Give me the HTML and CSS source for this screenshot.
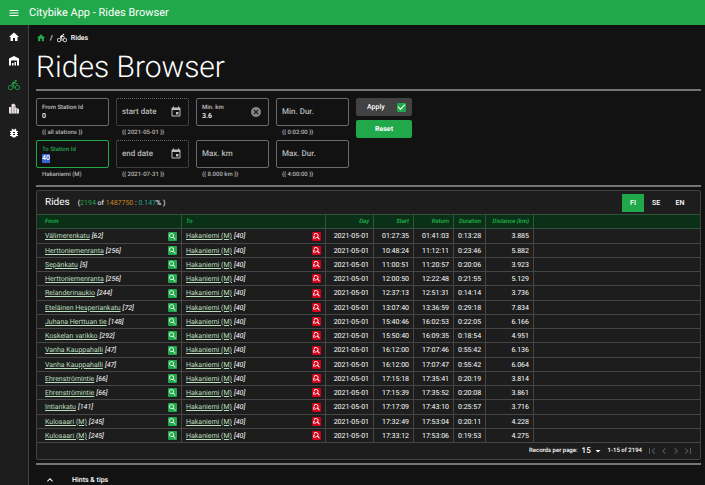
FILE: index.html
```html
<!DOCTYPE html>
<html lang="en">
<head>
<meta charset="utf-8">
<title>Citybike App - Rides Browser</title>
<link rel="stylesheet" href="styles.css">
</head>
<body>
<svg class="sprite" aria-hidden="true">
  <symbol id="menu" viewBox="0 0 24 24"><path d="M3 18h18v-2H3v2zm0-5h18v-2H3v2zm0-7v2h18V6H3z"/></symbol>
  <symbol id="home" viewBox="0 0 24 24"><path d="M10 20v-6h4v6h5v-8h3L12 3 2 12h3v8z"/></symbol>
  <symbol id="station" viewBox="0 0 24 24"><path d="M12 2 2 7v14h4V11h12v10h4V7zM8 16h3v5H8zm5-2h3v7h-3z"/></symbol>
  <symbol id="bike" viewBox="0 0 24 24"><path d="M15.5 5.5c1.1 0 2-.9 2-2s-.9-2-2-2-2 .9-2 2 .9 2 2 2zM5 12c-2.8 0-5 2.2-5 5s2.2 5 5 5 5-2.2 5-5-2.2-5-5-5zm0 8.500c-1.900 0-3.500-1.600-3.500-3.500s1.600-3.500 3.500-3.500 3.500 1.600 3.500 3.500-1.600 3.500-3.500 3.500zm5.800-10 2.400-2.400.8.800c1.300 1.300 3 2.100 5.100 2.100V9c-1.500 0-2.700-.6-3.600-1.500l-1.900-1.900c-.5-.4-1-.6-1.600-.6s-1.100.2-1.400.6L7.800 8.400c-.4.400-.6.900-.6 1.400 0 .6.200 1.100.6 1.400L11 14v5h2v-6.200l-2.200-2.300zM19 12c-2.800 0-5 2.200-5 5s2.200 5 5 5 5-2.200 5-5-2.200-5-5-5zm0 8.500c-1.900 0-3.500-1.600-3.500-3.500s1.600-3.500 3.500-3.500 3.500 1.600 3.500 3.500-1.600 3.500-3.500 3.500z"/></symbol>
  <symbol id="city" viewBox="0 0 24 24"><path d="M2 8h5V3l4-2 4 3v5l7 3v9H2z"/><path class="shade" d="M6 8h2v12H6zM11 6h2v14h-2zm5 5h2v9h-2z"/></symbol>
  <symbol id="bug" viewBox="0 0 24 24"><path d="M20 8h-2.810c-.45-.78-1.070-1.450-1.820-1.960L17 4.410 15.590 3l-2.170 2.170C12.960 5.060 12.490 5 12 5s-.96.06-1.410.17L8.410 3 7 4.410l1.620 1.630C7.880 6.550 7.260 7.220 6.810 8H4v2h2.090c-.05.33-.09.66-.09 1v1H4v2h2v1c0 .34.04.67.09 1H4v2h2.810c1.040 1.790 2.970 3 5.190 3s4.150-1.210 5.190-3H20v-2h-2.090c.05-.33.09-.66.09-1v-1h2v-2h-2v-1c0-.34-.04-.67-.09-1H20V8zm-6 8h-4v-2h4v2zm0-4h-4v-2h4v2z"/></symbol>
  <symbol id="event" viewBox="0 0 24 24"><path d="M17 12h-5v5h5v-5zM16 1v2H8V1H6v2H5c-1.110 0-1.990.9-1.990 2L3 19c0 1.100.89 2 2 2h14c1.100 0 2-.9 2-2V5c0-1.100-.9-2-2-2h-1V1h-2zm3 18H5V8h14v11z"/></symbol>
  <symbol id="cancel" viewBox="0 0 24 24"><path d="M12 2C6.470 2 2 6.470 2 12s4.470 10 10 10 10-4.470 10-10S17.530 2 12 2zm5 13.590L15.590 17 12 13.410 8.410 17 7 15.590 10.590 12 7 8.410 8.410 7 12 10.590 15.590 7 17 8.410 13.410 12 17 15.590z"/></symbol>
  <symbol id="search" viewBox="0 0 24 24"><path d="M15.500 14h-.79l-.28-.27A6.470 6.470 0 0 0 16 9.500 6.500 6.500 0 1 0 9.500 16c1.610 0 3.090-.59 4.230-1.570l.27.28v.79l5 4.990L20.490 19l-4.990-5zm-6 0a4.500 4.500 0 1 1 0-9 4.500 4.500 0 0 1 0 9z"/></symbol>
  <symbol id="unsearch" viewBox="0 0 24 24"><path d="M11 3a6.500 6.500 0 0 1 5.300 10.200l4.700 5.300-1.800 1.800-5.200-5.100-2 .8v-2.400A4.300 4.300 0 1 0 6.500 9H4.200A6.500 6.500 0 0 1 11 3zM3 11h5v2H5v2h3v2H3zm6 3h2v4H9z"/></symbol>
  <symbol id="up" viewBox="0 0 24 24"><path d="m12 8-6 6 1.410 1.410L12 10.830l4.590 4.580L18 14z"/></symbol>
  <symbol id="drop" viewBox="0 0 24 24"><path d="m7 10 5 5 5-5z"/></symbol>
  <symbol id="first" viewBox="0 0 24 24"><path d="M18.410 16.590 13.820 12l4.590-4.590L17 6l-6 6 6 6zM6 6h2v12H6z"/></symbol>
  <symbol id="prev" viewBox="0 0 24 24"><path d="M15.410 7.410 14 6l-6 6 6 6 1.410-1.410L10.830 12z"/></symbol>
  <symbol id="next" viewBox="0 0 24 24"><path d="M10 6 8.590 7.410 13.170 12l-4.580 4.590L10 18l6-6z"/></symbol>
  <symbol id="last" viewBox="0 0 24 24"><path d="M5.590 7.410 10.180 12l-4.590 4.590L7 18l6-6-6-6zM16 6h2v12h-2z"/></symbol>
</svg>

<header class="topbar">
  <button class="menu" aria-label="Menu"><svg><use href="#menu"/></svg></button>
  <span class="app-name">Citybike App - Rides Browser</span>
</header>

<div class="shell">
  <nav class="rail" aria-label="Main">
    <a href="#" aria-label="Home"><svg><use href="#home"/></svg></a>
    <a href="#" aria-label="Stations"><svg><use href="#station"/></svg></a>
    <a href="#" class="active" aria-label="Rides"><svg><use href="#bike"/></svg></a>
    <a href="#" class="city" aria-label="City"><svg><use href="#city"/></svg></a>
    <a href="#" aria-label="Debug"><svg><use href="#bug"/></svg></a>
  </nav>

  <main>
    <nav class="crumbs" aria-label="Breadcrumb">
      <a href="#" aria-label="Home"><svg class="green"><use href="#home"/></svg></a><span>/</span><svg><use href="#bike"/></svg><span>Rides</span>
    </nav>
    <h1>Rides Browser</h1>

    <form class="filters">
      <div class="field">
        <div class="box"><div class="entry"><label for="from">From Station Id</label><input id="from" value="0"></div></div>
        <p>{{ all stations }}</p>
      </div>
      <div class="field">
        <div class="box dashed"><input id="start" class="empty" placeholder="start date" aria-label="start date"><svg><use href="#event"/></svg></div>
        <p>{{ 2021-05-01 }}</p>
      </div>
      <div class="field">
        <div class="box"><div class="entry"><label for="minkm">Min. km</label><input id="minkm" value="3.6"></div><svg class="dim"><use href="#cancel"/></svg></div>
      </div>
      <div class="field">
        <div class="box"><input class="empty" placeholder="Min. Dur." aria-label="Min. Dur."></div>
        <p>{{ 0:02:00 }}</p>
      </div>
      <div class="actions">
        <label class="apply"><span>Apply</span><input type="checkbox" checked></label>
        <button type="reset" class="reset">Reset</button>
      </div>
      <div class="field">
        <div class="box focused"><div class="entry"><label for="to">To Station Id</label><input id="to" class="selected" value="40" size="1"></div></div>
        <p>Hakaniemi (M)</p>
      </div>
      <div class="field">
        <div class="box dashed"><input class="empty" placeholder="end date" aria-label="end date"><svg><use href="#event"/></svg></div>
        <p>{{ 2021-07-31 }}</p>
      </div>
      <div class="field">
        <div class="box"><input class="empty" placeholder="Max. km" aria-label="Max. km"></div>
        <p>{{ 8.000 km }}</p>
      </div>
      <div class="field">
        <div class="box"><input class="empty" placeholder="Max. Dur." aria-label="Max. Dur."></div>
        <p>{{ 4:00:00 }}</p>
      </div>
    </form>

    <section class="card">
      <div class="card-head">
        <h2>Rides</h2>
        <span class="count">(<b class="g">2194</b> of <b class="o">1487750</b> : <b class="c">0.147</b>% )</span>
        <div class="langs"><button class="on">FI</button><button>SE</button><button>EN</button></div>
      </div>
      <table>
        <colgroup><col class="origin"><col class="place"><col class="wide"><col class="time"><col class="time"><col class="dur"><col class="wide"><col></colgroup>
        <thead><tr><th>From</th><th>To</th><th>Day</th><th>Start</th><th>Return</th><th>Duration</th><th>Distance (km)</th><th></th></tr></thead>
        <tbody>
          <tr><td><div><a href="#">Välimerenkatu</a><i>[62]</i><button aria-label="Filter"><svg><use href="#search"/></svg></button></div></td><td><div><a href="#">Hakaniemi (M)</a><i>[40]</i><button class="red" aria-label="Clear filter"><svg><use href="#unsearch"/></svg></button></div></td><td>2021-05-01</td><td>01:27:35</td><td>01:41:03</td><td>0:13:28</td><td>3.885</td><td></td></tr>
          <tr><td><div><a href="#">Herttoniemenranta</a><i>[256]</i><button aria-label="Filter"><svg><use href="#search"/></svg></button></div></td><td><div><a href="#">Hakaniemi (M)</a><i>[40]</i><button class="red" aria-label="Clear filter"><svg><use href="#unsearch"/></svg></button></div></td><td>2021-05-01</td><td>10:48:24</td><td>11:12:11</td><td>0:23:46</td><td>5.882</td><td></td></tr>
          <tr><td><div><a href="#">Sepänkatu</a><i>[5]</i><button aria-label="Filter"><svg><use href="#search"/></svg></button></div></td><td><div><a href="#">Hakaniemi (M)</a><i>[40]</i><button class="red" aria-label="Clear filter"><svg><use href="#unsearch"/></svg></button></div></td><td>2021-05-01</td><td>11:00:51</td><td>11:20:57</td><td>0:20:06</td><td>3.923</td><td></td></tr>
          <tr><td><div><a href="#">Herttoniemenranta</a><i>[256]</i><button aria-label="Filter"><svg><use href="#search"/></svg></button></div></td><td><div><a href="#">Hakaniemi (M)</a><i>[40]</i><button class="red" aria-label="Clear filter"><svg><use href="#unsearch"/></svg></button></div></td><td>2021-05-01</td><td>12:00:50</td><td>12:22:48</td><td>0:21:55</td><td>5.129</td><td></td></tr>
          <tr><td><div><a href="#">Relanderinaukio</a><i>[244]</i><button aria-label="Filter"><svg><use href="#search"/></svg></button></div></td><td><div><a href="#">Hakaniemi (M)</a><i>[40]</i><button class="red" aria-label="Clear filter"><svg><use href="#unsearch"/></svg></button></div></td><td>2021-05-01</td><td>12:37:13</td><td>12:51:31</td><td>0:14:14</td><td>3.736</td><td></td></tr>
          <tr><td><div><a href="#">Eteläinen Hesperiankatu</a><i>[72]</i><button aria-label="Filter"><svg><use href="#search"/></svg></button></div></td><td><div><a href="#">Hakaniemi (M)</a><i>[40]</i><button class="red" aria-label="Clear filter"><svg><use href="#unsearch"/></svg></button></div></td><td>2021-05-01</td><td>13:07:40</td><td>13:36:59</td><td>0:29:18</td><td>7.834</td><td></td></tr>
          <tr><td><div><a href="#">Juhana Herttuan tie</a><i>[148]</i><button aria-label="Filter"><svg><use href="#search"/></svg></button></div></td><td><div><a href="#">Hakaniemi (M)</a><i>[40]</i><button class="red" aria-label="Clear filter"><svg><use href="#unsearch"/></svg></button></div></td><td>2021-05-01</td><td>15:40:46</td><td>16:02:53</td><td>0:22:05</td><td>6.166</td><td></td></tr>
          <tr><td><div><a href="#">Koskelan varikko</a><i>[292]</i><button aria-label="Filter"><svg><use href="#search"/></svg></button></div></td><td><div><a href="#">Hakaniemi (M)</a><i>[40]</i><button class="red" aria-label="Clear filter"><svg><use href="#unsearch"/></svg></button></div></td><td>2021-05-01</td><td>15:50:40</td><td>16:09:35</td><td>0:18:54</td><td>4.951</td><td></td></tr>
          <tr><td><div><a href="#">Vanha Kauppahalli</a><i>[47]</i><button aria-label="Filter"><svg><use href="#search"/></svg></button></div></td><td><div><a href="#">Hakaniemi (M)</a><i>[40]</i><button class="red" aria-label="Clear filter"><svg><use href="#unsearch"/></svg></button></div></td><td>2021-05-01</td><td>16:12:00</td><td>17:07:46</td><td>0:55:42</td><td>6.136</td><td></td></tr>
          <tr><td><div><a href="#">Vanha Kauppahalli</a><i>[47]</i><button aria-label="Filter"><svg><use href="#search"/></svg></button></div></td><td><div><a href="#">Hakaniemi (M)</a><i>[40]</i><button class="red" aria-label="Clear filter"><svg><use href="#unsearch"/></svg></button></div></td><td>2021-05-01</td><td>16:12:00</td><td>17:07:47</td><td>0:55:42</td><td>6.064</td><td></td></tr>
          <tr><td><div><a href="#">Ehrenströmintie</a><i>[66]</i><button aria-label="Filter"><svg><use href="#search"/></svg></button></div></td><td><div><a href="#">Hakaniemi (M)</a><i>[40]</i><button class="red" aria-label="Clear filter"><svg><use href="#unsearch"/></svg></button></div></td><td>2021-05-01</td><td>17:15:18</td><td>17:35:41</td><td>0:20:19</td><td>3.814</td><td></td></tr>
          <tr><td><div><a href="#">Ehrenströmintie</a><i>[66]</i><button aria-label="Filter"><svg><use href="#search"/></svg></button></div></td><td><div><a href="#">Hakaniemi (M)</a><i>[40]</i><button class="red" aria-label="Clear filter"><svg><use href="#unsearch"/></svg></button></div></td><td>2021-05-01</td><td>17:15:39</td><td>17:35:52</td><td>0:20:08</td><td>3.861</td><td></td></tr>
          <tr><td><div><a href="#">Intiankatu</a><i>[141]</i><button aria-label="Filter"><svg><use href="#search"/></svg></button></div></td><td><div><a href="#">Hakaniemi (M)</a><i>[40]</i><button class="red" aria-label="Clear filter"><svg><use href="#unsearch"/></svg></button></div></td><td>2021-05-01</td><td>17:17:09</td><td>17:43:10</td><td>0:25:57</td><td>3.716</td><td></td></tr>
          <tr><td><div><a href="#">Kulosaari (M)</a><i>[245]</i><button aria-label="Filter"><svg><use href="#search"/></svg></button></div></td><td><div><a href="#">Hakaniemi (M)</a><i>[40]</i><button class="red" aria-label="Clear filter"><svg><use href="#unsearch"/></svg></button></div></td><td>2021-05-01</td><td>17:32:49</td><td>17:53:04</td><td>0:20:11</td><td>4.228</td><td></td></tr>
          <tr><td><div><a href="#">Kulosaari (M)</a><i>[245]</i><button aria-label="Filter"><svg><use href="#search"/></svg></button></div></td><td><div><a href="#">Hakaniemi (M)</a><i>[40]</i><button class="red" aria-label="Clear filter"><svg><use href="#unsearch"/></svg></button></div></td><td>2021-05-01</td><td>17:33:12</td><td>17:53:06</td><td>0:19:53</td><td>4.275</td><td></td></tr>
        </tbody>
      </table>
      <div class="pager">
        <label for="per-page">Records per page:</label>
        <span class="per-page"><select id="per-page"><option>15</option></select><svg><use href="#drop"/></svg></span>
        <span class="range">1-15 of 2194</span>
        <span class="steps">
          <button disabled aria-label="First page"><svg><use href="#first"/></svg></button>
          <button disabled aria-label="Previous page"><svg><use href="#prev"/></svg></button>
          <button disabled aria-label="Next page"><svg><use href="#next"/></svg></button>
          <button disabled aria-label="Last page"><svg><use href="#last"/></svg></button>
        </span>
      </div>
    </section>

    <button class="hints"><svg><use href="#up"/></svg><span>Hints &amp; tips</span></button>
  </main>
</div>
</body>
</html>
```

FILE: styles.css
```css
* { box-sizing: border-box; }
html { height: 100%; overflow: hidden; }
body {
  margin: 0;
  min-height: 100%;
  display: flex;
  flex-direction: column;
  background: #121212;
  color: #fff;
  font: 500 7px/10px Roboto, sans-serif;
  text-rendering: geometricPrecision;
}
button, input, select { font: inherit; color: inherit; background: none; border: 0; padding: 0; margin: 0; outline: 0; text-rendering: inherit; }
a { color: inherit; }
h1, h2, p { margin: 0; }
svg { width: 12px; height: 12px; fill: currentColor; flex: none; display: block; }
.sprite { width: 0; height: 0; position: absolute; }

.topbar { display: flex; align-items: center; height: 25px; padding-left: 8px; gap: 9px; background: #21a84a; }
.app-name { font-size: 11px; line-height: 14px; font-weight: 400; }

.shell { display: flex; flex: 1; }
.rail {
  width: 29px;
  flex: none;
  display: flex;
  flex-direction: column;
  align-items: center;
  gap: 12px;
  padding-top: 6px;
  background: #1d1d1d;
  border-right: 1px solid #414141;
}
.rail .active, .green { color: #21a84a; }
.rail .city { color: #e8e0e4; }
.shade { fill: #a98f9c; }

main { flex: 1; min-width: 0; padding: 8px 4px 0 7px; }
.crumbs { display: flex; align-items: center; gap: 4px; height: 10px; }
.crumbs svg { width: 10px; height: 10px; }
h1 { padding-top: 4px; font-size: 30px; line-height: 42px; font-weight: 300; }

.filters {
  display: grid;
  grid-template-columns: repeat(4, 73px) 56px;
  column-gap: 7px;
  padding: 7px 0 3px;
  border-top: 2px solid #757575;
  border-bottom: 2px solid #757575;
}
.field { height: 42px; }
.box {
  display: flex;
  align-items: center;
  height: 28px;
  padding: 0 6px 0 5px;
  border: 1px solid #6a6a6a;
  border-radius: 2px;
}
.box.dashed { border-style: dotted; }
.box.focused { border-color: #21a84a; }
.box svg { color: #bdbdbd; }
.box svg.dim { color: #858585; }
.box input { display: block; width: 100%; min-width: 0; }
.entry { flex: 1; min-width: 0; font-size: 7px; line-height: 9px; }
.entry label { display: block; font-size: 6px; color: #c0c0c0; }
.entry .selected { width: 8px; }
.focused label { color: #21a84a; }
.box .selected { width: 8px; background: #3367d1; }
.empty, .empty::placeholder { font-size: 8px; color: #b8b8b8; opacity: 1; }
.field p { padding: 3px 6px 0; font-size: 6px; line-height: 8px; color: #b8b8b8; }

.actions { display: flex; flex-direction: column; gap: 4px; }
.apply, .reset { height: 18px; border-radius: 2px; }
.apply { display: flex; align-items: center; justify-content: space-between; padding: 0 6px 0 11px; background: #424242; }
.apply input {
  appearance: none;
  width: 9px;
  height: 9px;
  border-radius: 1px;
  background: #21a84a;
  display: grid;
  place-items: center;
}
.apply input::after { content: ""; width: 6px; height: 3px; border: solid #fff; border-width: 0 0 1px 1px; transform: translateY(-1px) rotate(-45deg); }
.reset { background: #21a84a; font-weight: 700; }

.card { margin-top: 3px; background: #1d1d1d; border: 1px solid #414141; border-radius: 2px; }
.card-head { display: flex; align-items: center; height: 23px; padding: 0 8px; }
h2 { font-size: 10px; line-height: 14px; font-weight: 400; }
.count { margin-left: 8px; font-weight: 400; }
.count b { font-weight: 400; }
.g { color: #21a84a; }
.o { color: #c58322; }
.c { color: #26a69a; }
.langs { display: flex; margin-left: auto; }
.langs button { width: 24px; height: 18px; }
.langs button:first-child { width: 22px; }
.langs .on { background: #21a84a; }

table { width: 100%; table-layout: fixed; border-collapse: separate; border-spacing: 0; }
.origin { width: 145px; }
.place { width: 144px; }
.wide { width: 48px; }
.time { width: 40px; }
.dur { width: 32px; }
th, td { height: 14px; padding: 0 4px; border: 0 solid #454545; border-width: 0 1px 1px 0; text-align: right; font-weight: 400; line-height: 10px; white-space: nowrap; }
th { height: 15px; border-top-width: 1px; background: #0a3018; border-color: #31523b; color: #21b84c; font-size: 6px; font-weight: 500; font-style: italic; }
tbody tr:nth-child(4n+1) td { height: 15px; }
th:nth-child(-n+2), td:nth-child(-n+2) { text-align: left; }
th:first-child, td:first-child { padding-left: 8px; }
th:last-child, td:last-child { border-right: 0; }
td { font-size: 7px; }
td div { display: flex; align-items: center; gap: 2px; }
td a { color: #b9dfbd; }
td button { width: 9px; height: 9px; margin-left: auto; border-radius: 1px; background: #21a84a; }
td button svg { width: 9px; height: 9px; }
td .red { background: #d00018; }

.pager { display: flex; align-items: center; justify-content: flex-end; height: 16px; padding-right: 6px; font-size: 6px; }
.per-page { display: flex; align-items: center; margin: 0 4px; font-size: 8px; }
.per-page select { appearance: none; }
.steps { display: flex; margin-left: 4px; color: #585858; }

.hints { display: flex; align-items: center; gap: 16px; width: 100%; height: 32px; margin-top: 3px; padding-left: 8px; border-top: 2px solid #757575; }
```
